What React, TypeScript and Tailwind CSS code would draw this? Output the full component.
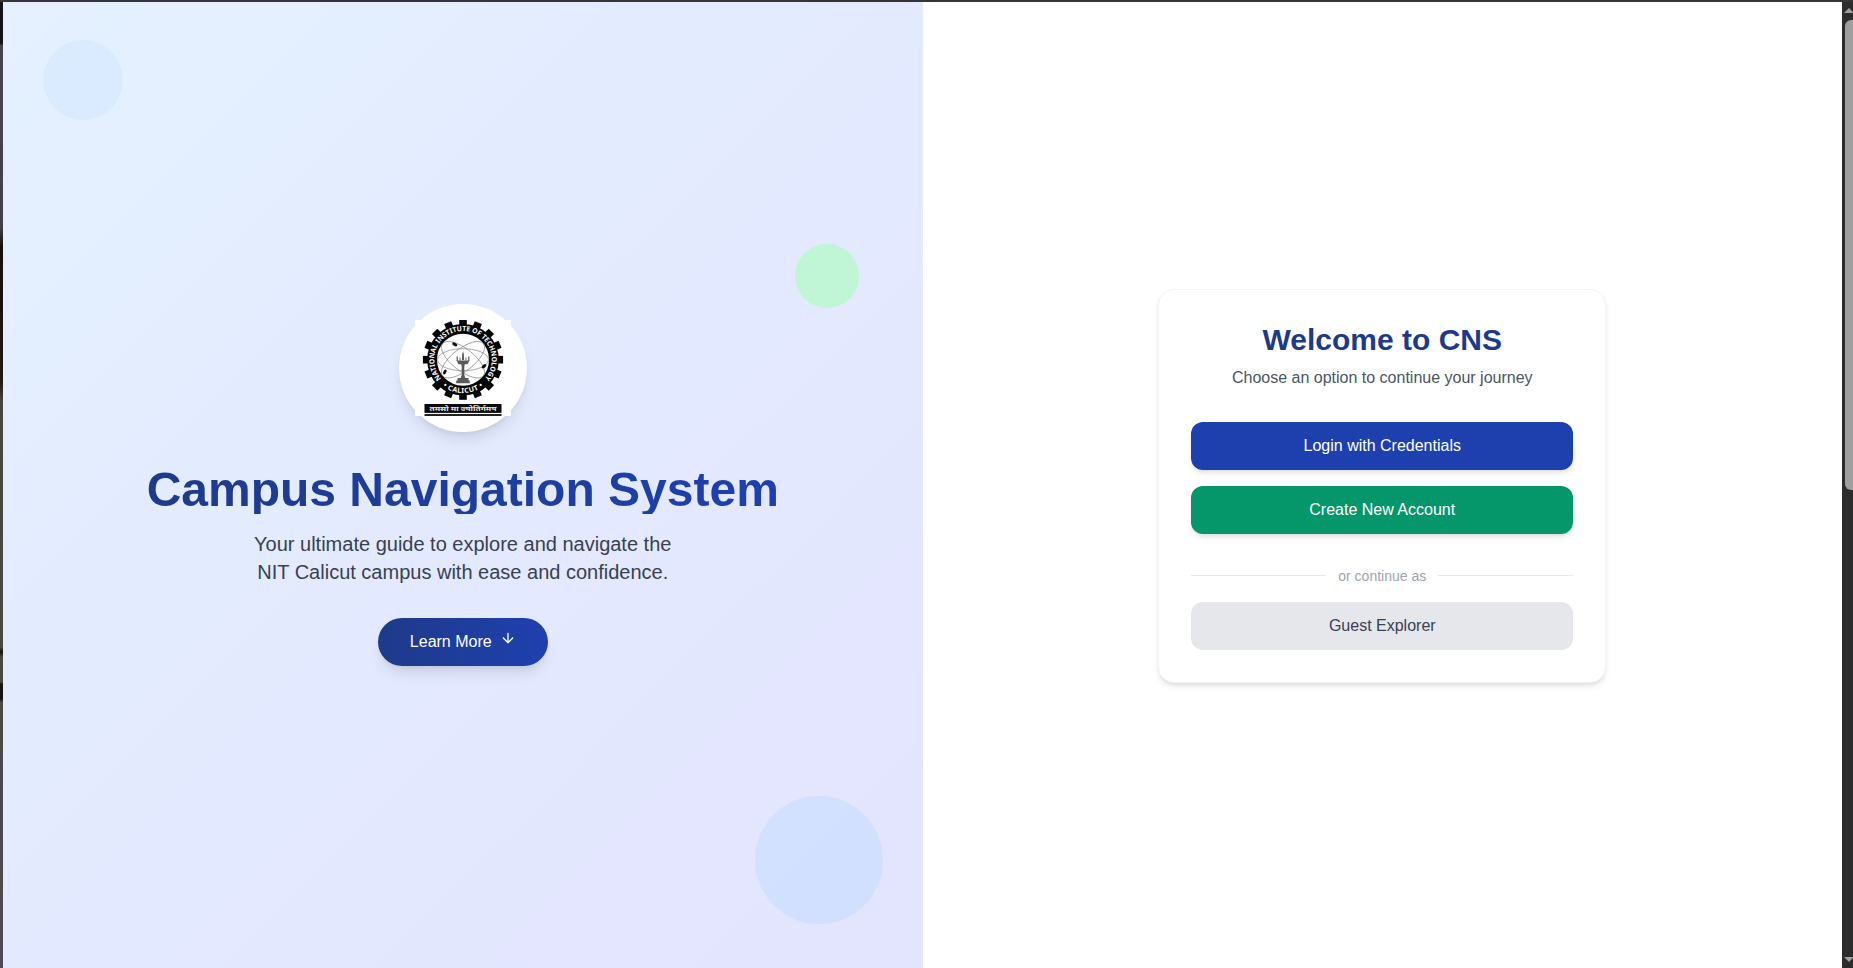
import React from 'react';

const teeth = Array.from({ length: 16 }, (_, i) => i * 22.5);

function Emblem() {
  return (
    <svg viewBox="0 0 96 96" className="size-24 bg-white" role="img">
      <defs>
        <path id="arc-top" d="M 27.6 60.1 A 28.8 28.8 0 1 1 68.4 60.1" />
        <path id="arc-bottom" d="M 22 60.7 A 33.5 33.5 0 0 0 74 60.7" />
      </defs>
      <g fill="#050505">
        {teeth.map((a) => (
          <rect key={a} x="44.2" y="-0.4" width="7.6" height="8" transform={`rotate(${a} 48 39.7)`} />
        ))}
      </g>
      <circle cx="48" cy="39.7" r="30.9" fill="white" stroke="#050505" strokeWidth="9.8" />
      <g fill="none" stroke="#858585" strokeWidth="0.7">
        <ellipse cx="48" cy="39.7" rx="26" ry="11" transform="rotate(38 48 39.7)" />
        <ellipse cx="48" cy="39.7" rx="26" ry="11" transform="rotate(-38 48 39.7)" />
        <ellipse cx="48" cy="39.7" rx="25.5" ry="11" />
      </g>
      <g fill="#111">
        <ellipse cx="39.8" cy="24.4" rx="2.8" ry="1.6" transform="rotate(30 39.8 24.4)" />
        <ellipse cx="29.8" cy="52" rx="2.6" ry="1.5" transform="rotate(-60 29.8 52)" />
        <ellipse cx="69" cy="46.3" rx="2.8" ry="1.6" transform="rotate(-40 69 46.3)" />
      </g>
      <g fill="#5a5a5a">
        <path d="M46.9 40h2.2l-.3-6-.8-2.5-.8 2.5z" />
        <path d="M41.6 40.5h12.8l-1.8 3.8h-9.2z" />
        <path d="M41.6 36.5h1.2v4.5h-1.2zM53.2 36.5h1.2v4.5h-1.2zM44.6 37.5h.9v3h-.9zM50.5 37.5h.9v3h-.9z" />
        <path d="M46.2 44h3.6l-.5 3v8l1.4 4h-5.4l1.4-4v-8z" />
        <path d="M42.5 58h11v2.4h1.3v2.8H41.2v-2.8h1.3z" />
      </g>
      <g fill="white" fontFamily="Noto Sans, Liberation Sans, sans-serif" fontWeight="700" fontSize="7">
        <text><textPath href="#arc-top" startOffset="50%" textAnchor="middle" textLength="131" lengthAdjust="spacingAndGlyphs">NATIONAL INSTITUTE OF TECHNOLOGY</textPath></text>
        <text><textPath href="#arc-bottom" startOffset="50%" textAnchor="middle" textLength="43">• CALICUT •</textPath></text>
      </g>
      <rect x="9.5" y="84" width="77" height="8.9" fill="#080808" />
      <rect x="9.5" y="94" width="77" height="2" fill="#222" />
      <text x="48" y="90.6" fill="#e5e5e5" fontFamily="Noto Sans Devanagari, Lohit Devanagari, Noto Sans, sans-serif" fontWeight="700" fontSize="6.8" textAnchor="middle" textLength="67" lengthAdjust="spacingAndGlyphs">तमसो मा ज्योतिर्गमय</text>
    </svg>
  );
}

function Hero() {
  return (
    <section className="relative flex h-[969px] flex-1 flex-col items-center bg-[linear-gradient(135deg,#e4f1ff,#e3eafe_50%,#e3e4fe)] pt-[302px] text-center">
      <div className="absolute top-[38px] left-10 size-20 rounded-full bg-[#bfdbfe] opacity-25" />
      <div className="absolute top-[242px] right-16 size-16 rounded-full bg-[#bbf7d0] opacity-90" />
      <div className="absolute top-[794px] right-10 size-32 rounded-full bg-[#bfdbfe] opacity-50" />
      <div className="relative mb-[34px] flex size-32 shrink-0 items-center justify-center rounded-full bg-white shadow-lg">
        <Emblem />
      </div>
      <h1 className="mb-4 bg-gradient-to-r from-[#1e3a8a] to-[#1e40af] bg-clip-text text-5xl leading-none font-bold text-transparent">
        Campus Navigation System
      </h1>
      <p className="mb-8 w-[448px] text-xl text-[#374151]">
        Your ultimate guide to explore and navigate the NIT Calicut campus with ease and confidence.
      </p>
      <button className="flex h-12 items-center rounded-full bg-gradient-to-r from-[#1e3a8a] to-[#1e40af] px-8 text-white shadow-lg">
        Learn More
        <svg viewBox="0 0 24 24" className="relative -top-1 ml-2 size-4" fill="none" stroke="currentColor" strokeWidth="2" strokeLinecap="round" strokeLinejoin="round">
          <path d="M12 5v14M19 12l-7 7-7-7" />
        </svg>
      </button>
    </section>
  );
}

function WelcomeCard() {
  return (
    <section className="flex flex-1 items-start justify-center bg-white pt-[287px]">
      <div className="w-[448px] rounded-2xl border border-[#f3f4f6] bg-white p-8 text-center shadow-md">
        <h2 className="mb-2 text-3xl font-bold text-[#1e3a8a]">Welcome to CNS</h2>
        <p className="mb-8 text-[#4b5563]">Choose an option to continue your journey</p>
        <div className="flex flex-col gap-4">
          <button className="h-12 rounded-xl bg-[#1e40af] text-white shadow-md">Login with Credentials</button>
          <button className="h-12 rounded-xl bg-[#059669] text-white shadow-md">Create New Account</button>
          <div className="mt-4 flex items-center text-sm text-[#9ca3af]">
            <div className="relative -top-px h-px flex-1 bg-[#e5e7eb]" />
            <span className="px-3">or continue as</span>
            <div className="relative -top-px h-px flex-1 bg-[#e5e7eb]" />
          </div>
          <button className="h-12 rounded-xl bg-[#e5e7eb] text-[#374151]">Guest Explorer</button>
        </div>
      </div>
    </section>
  );
}

function Scrollbar() {
  return (
    <div className="flex w-[11px] shrink-0 flex-col items-end overflow-hidden bg-[#2c2c2c]">
      <svg viewBox="0 0 9 6" preserveAspectRatio="none" className="mt-[6px] h-[5px] w-[9px] shrink-0"><path d="M0 6L5 0L9 5V6z" fill="#9f9f9f" /></svg>
      <div className="mt-[7px] h-[470px] w-2 shrink-0 rounded-l-md bg-[#9f9f9f]" />
      <svg viewBox="0 0 9 6" preserveAspectRatio="none" className="mt-auto mb-[6px] h-[5px] w-[9px] shrink-0"><path d="M0 0L5 6L9 1V0z" fill="#9f9f9f" /></svg>
    </div>
  );
}

export default function App() {
  return (
    <div className="flex h-[968px] w-[1853px] overflow-hidden border-t-2 border-[#353437] font-['Liberation_Sans',Arial,sans-serif]">
      <div className="w-[3px] shrink-0 bg-[linear-gradient(to_bottom,#141214_0,#141214_42px,#454447_43px,#454550_110px,#414044_225px,#150f0e_245px,#241812_380px,#494642_400px,#494844_645px,#151413_650px,#494844_655px,#494844_680px,#151413_682px,#151413_697px,#4a4945_700px,#4c4b51_966px)]" />
      <Hero />
      <WelcomeCard />
      <Scrollbar />
    </div>
  );
}
